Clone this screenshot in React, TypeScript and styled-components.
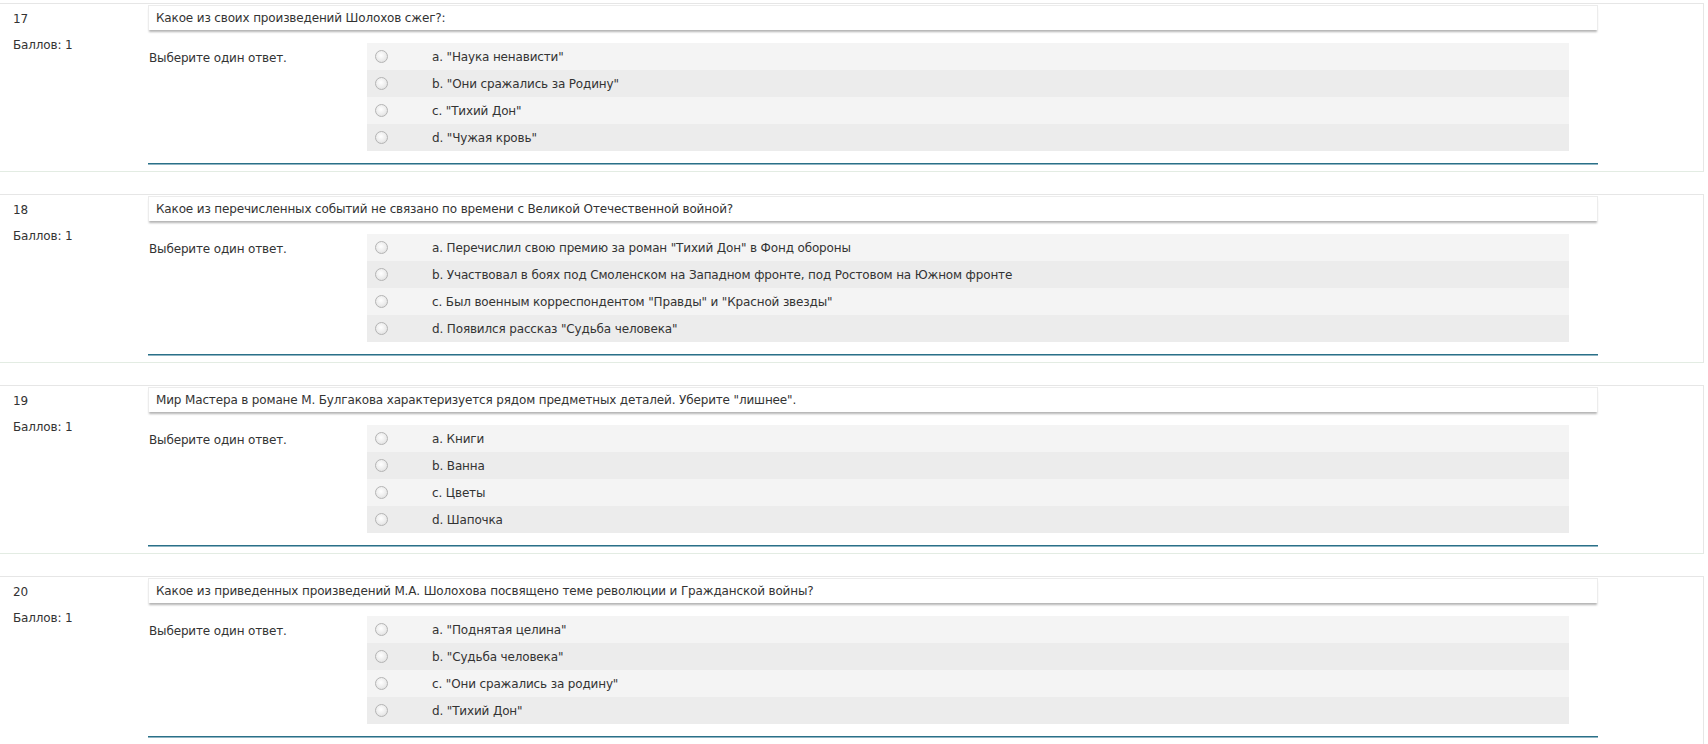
import React from "react";
import styled, { createGlobalStyle } from "styled-components";

// Question data
interface Question {
  num: number;
  text: string;
  answers: string[];
}

const questions: Question[] = [
  {
    num: 17,
    text: "Какое из своих произведений Шолохов сжег?:",
    answers: ['"Наука ненависти"', '"Они сражались за Родину"', '"Тихий Дон"', '"Чужая кровь"'],
  },
  {
    num: 18,
    text: "Какое из перечисленных событий не связано по времени с Великой Отечественной войной?",
    answers: [
      'Перечислил свою премию за роман "Тихий Дон" в Фонд обороны',
      "Участвовал в боях под Смоленском на Западном фронте, под Ростовом на Южном фронте",
      'Был военным корреспондентом "Правды" и "Красной звезды"',
      'Появился рассказ "Судьба человека"',
    ],
  },
  {
    num: 19,
    text: 'Мир Мастера в романе М. Булгакова характеризуется рядом предметных деталей. Уберите "лишнее".',
    answers: ["Книги", "Ванна", "Цветы", "Шапочка"],
  },
  {
    num: 20,
    text: "Какое из приведенных произведений М.А. Шолохова посвящено теме революции и Гражданской войны?",
    answers: ['"Поднятая целина"', '"Судьба человека"', '"Они сражались за родину"', '"Тихий Дон"'],
  },
];

const letters = ["a", "b", "c", "d"];

const GlobalStyle = createGlobalStyle`
  body {
    margin: 0;
    background: #ffffff;
    font-family: "DejaVu Sans", Verdana, sans-serif;
    font-size: 12px;
    letter-spacing: -0.15px;
    color: #333333;
  }
`;

const Page = styled.div`
  padding-top: 3px;
  width: 1704px;
`;

const Card = styled.div`
  display: flex;
  border: 1px solid #e6e6e6;
  border-left: none;
  border-bottom-color: #e3ece3;
  margin-bottom: 22px;
  padding-bottom: 7px;
`;

const Info = styled.div`
  width: 135px;
  flex-shrink: 0;
  padding: 8px 0 0 13px;
  display: flex;
  flex-direction: column;
  gap: 11px;
  line-height: 15px;
`;

const Content = styled.div`
  width: 1450px;
  display: flex;
  flex-direction: column;
`;

const QText = styled.div`
  margin-top: 1px;
  height: 24px;
  padding: 0 7px;
  display: flex;
  align-items: center;
  border: 1px solid #ececec;
  border-bottom: none;
  box-shadow: 0 3px 2px -1px #b4b4b4;
  background: #ffffff;
`;

const AnswerBlock = styled.div`
  display: flex;
  margin-top: 13px;
`;

const Prompt = styled.div`
  width: 218px;
  flex-shrink: 0;
  padding: 8px 0 0 1px;
  line-height: 15px;
`;

const Answers = styled.div`
  width: 1202px;
  display: flex;
  flex-direction: column;
`;

const AnswerRow = styled.label<{ $alt: boolean }>`
  display: flex;
  align-items: center;
  height: 27px;
  padding-left: 8px;
  background: ${(p) => (p.$alt ? "#ececec" : "#f4f4f4")};
`;

const Radio = styled.span`
  width: 11px;
  height: 11px;
  border-radius: 50%;
  border: 1px solid #b4b4b4;
  background: radial-gradient(circle at 45% 40%, #ffffff 0%, #ececec 55%, #d6d6d6 100%);
  flex-shrink: 0;
`;

const AnswerLabel = styled.span`
  margin-left: 44px;
`;

const Divider = styled.div`
  margin-top: 12px;
  height: 1px;
  background: #2a7088;
  box-shadow: 0 1px 0 #8fb4c2;
`;

export default function App() {
  return (
    <>
      <GlobalStyle />
      <Page>
        {questions.map((q) => (
          <Card key={q.num}>
            <Info>
              <span>{q.num}</span>
              <span>Баллов: 1</span>
            </Info>
            <Content>
              <QText>{q.text}</QText>
              <AnswerBlock>
                <Prompt>Выберите один ответ.</Prompt>
                <Answers>
                  {q.answers.map((a, i) => (
                    <AnswerRow key={i} $alt={i % 2 === 1}>
                      <Radio />
                      <AnswerLabel>
                        {letters[i]}. {a}
                      </AnswerLabel>
                    </AnswerRow>
                  ))}
                </Answers>
              </AnswerBlock>
              <Divider />
            </Content>
          </Card>
        ))}
      </Page>
    </>
  );
}
